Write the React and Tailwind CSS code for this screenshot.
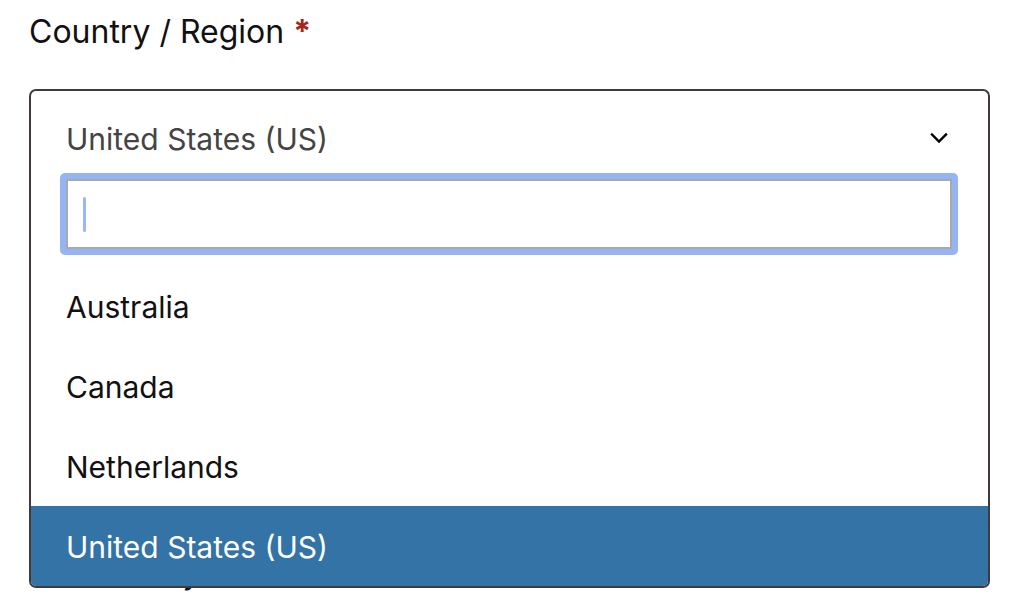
import React from 'react'

const countries = ['Australia', 'Canada', 'Netherlands', 'United States (US)']

const Chevron = () => (
    <svg className="w-[18px] h-[12px]" viewBox="0 0 18 12" fill="none" xmlns="http://www.w3.org/2000/svg">
        <path d="M2 2.5l7 7 7-7" stroke="black" strokeWidth="2.4" strokeLinecap="square" />
    </svg>
)

const CountrySelect = ({ selected }) => {
    return (
        <div className="relative mt-[37px] w-[961px]">
            {/* closed select */}
            <div className="flex items-start justify-between h-[80px] border-2 border-b-0 border-[#43393a] rounded-t-[7px] bg-white pl-[35px] pr-[40px] pt-[28px]">
                <span className="text-[30px] leading-[40px] text-[#444]">{selected}</span>
                <span className="mt-[13px]"><Chevron /></span>
            </div>

            {/* open dropdown */}
            <div className="absolute left-0 right-0 top-full z-10 bg-white border-2 border-t-0 border-[#43393a] rounded-b-[7px] overflow-hidden">
                <div className="pl-[29px] pr-[30px] pt-[4px] pb-[11px]">
                    <div className="rounded-[5px] bg-[#94b4f4] p-[6px]">
                        <div className="flex items-center h-[70px] bg-white border-2 border-[#a9a9a9] pl-[15px]">
                            <span className="block w-[3px] h-[35px] rounded-full bg-[#97b7f5]"></span>
                        </div>
                    </div>
                </div>
                <ul>
                    {countries.map((c) => (
                        <li
                            key={c}
                            className={c === selected
                                ? 'h-[80px] flex items-center pl-[35px] pt-[2px] text-[30px] bg-[#3373a5] text-white'
                                : 'h-[80px] flex items-center pl-[35px] pt-[2px] text-[30px] text-[#111]'}
                        >
                            {c}
                        </li>
                    ))}
                </ul>
            </div>
        </div>
    )
}

export default function App() {
    return (
        <div className="w-[1013px] h-[602px] overflow-hidden bg-white font-['Inter',sans-serif] text-[#111]">
            <div className="pl-[29px] pt-[12px]">
                <label className="block text-[32px] leading-[40px]">
                    Country / Region <span className="text-[#a3261b] font-bold">*</span>
                </label>
                <CountrySelect selected="United States (US)" />
                <label className="block mt-[384px] text-[32px] leading-[40px]">Town / City</label>
            </div>
        </div>
    )
}
